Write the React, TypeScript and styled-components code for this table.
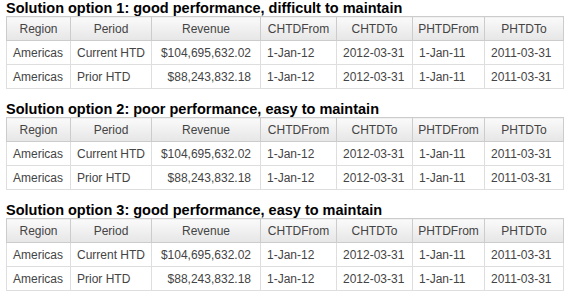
import styled, { createGlobalStyle } from 'styled-components'

const GlobalStyle = createGlobalStyle`
  body {
    margin: 0;
    padding: 0 6px;
    background: #fff;
    font-family: "Liberation Sans", Arial, sans-serif;
  }
`

const Page = styled.div`
  display: flex;
  flex-direction: column;
  gap: 13px;
  padding-top: 1px;
`

const Section = styled.section`
  display: flex;
  flex-direction: column;
`

const Title = styled.h3`
  margin: 0;
  font-size: 14.5px;
  line-height: 15px;
  font-weight: bold;
  color: #000;
`

const Table = styled.table`
  border-collapse: collapse;
  table-layout: fixed;
  width: 558px;
  font-size: 12px;
  color: #444;
`

const Th = styled.th`
  height: 23px;
  padding: 0 4px;
  font-weight: normal;
  text-align: center;
  border: 1px solid #cccccc;
  background: linear-gradient(to bottom, #fafafa 0%, #e6e6e6 100%);
  color: #444;
`

const Td = styled.td<{ $right?: boolean }>`
  height: 23px;
  padding: ${(p) => (p.$right ? '0 9px 0 6px' : '0 6px')};
  text-align: ${(p) => (p.$right ? 'right' : 'left')};
  border: 1px solid #dedede;
  white-space: nowrap;
`

const widths = [64, 81, 109, 76, 76, 72, 79]
const headers = ['Region', 'Period', 'Revenue', 'CHTDFrom', 'CHTDTo', 'PHTDFrom', 'PHTDTo']

const rows = [
  ['Americas', 'Current HTD', '$104,695,632.02', '1-Jan-12', '2012-03-31', '1-Jan-11', '2011-03-31'],
  ['Americas', 'Prior HTD', '$88,243,832.18', '1-Jan-12', '2012-03-31', '1-Jan-11', '2011-03-31'],
]

const titles = [
  'Solution option 1: good performance, difficult to maintain',
  'Solution option 2: poor performance, easy to maintain',
  'Solution option 3: good performance, easy to maintain',
]

const DataTable = () => (
  <Table>
    <colgroup>
      {widths.map((w, i) => (
        <col key={i} style={{ width: w }} />
      ))}
    </colgroup>
    <thead>
      <tr>
        {headers.map((h) => (
          <Th key={h}>{h}</Th>
        ))}
      </tr>
    </thead>
    <tbody>
      {rows.map((r, i) => (
        <tr key={i}>
          {r.map((c, j) => (
            <Td key={j} $right={j === 2}>
              {c}
            </Td>
          ))}
        </tr>
      ))}
    </tbody>
  </Table>
)

export default function App() {
  return (
    <>
      <GlobalStyle />
      <Page>
        {titles.map((t) => (
          <Section key={t}>
            <Title>{t}</Title>
            <DataTable />
          </Section>
        ))}
      </Page>
    </>
  )
}
